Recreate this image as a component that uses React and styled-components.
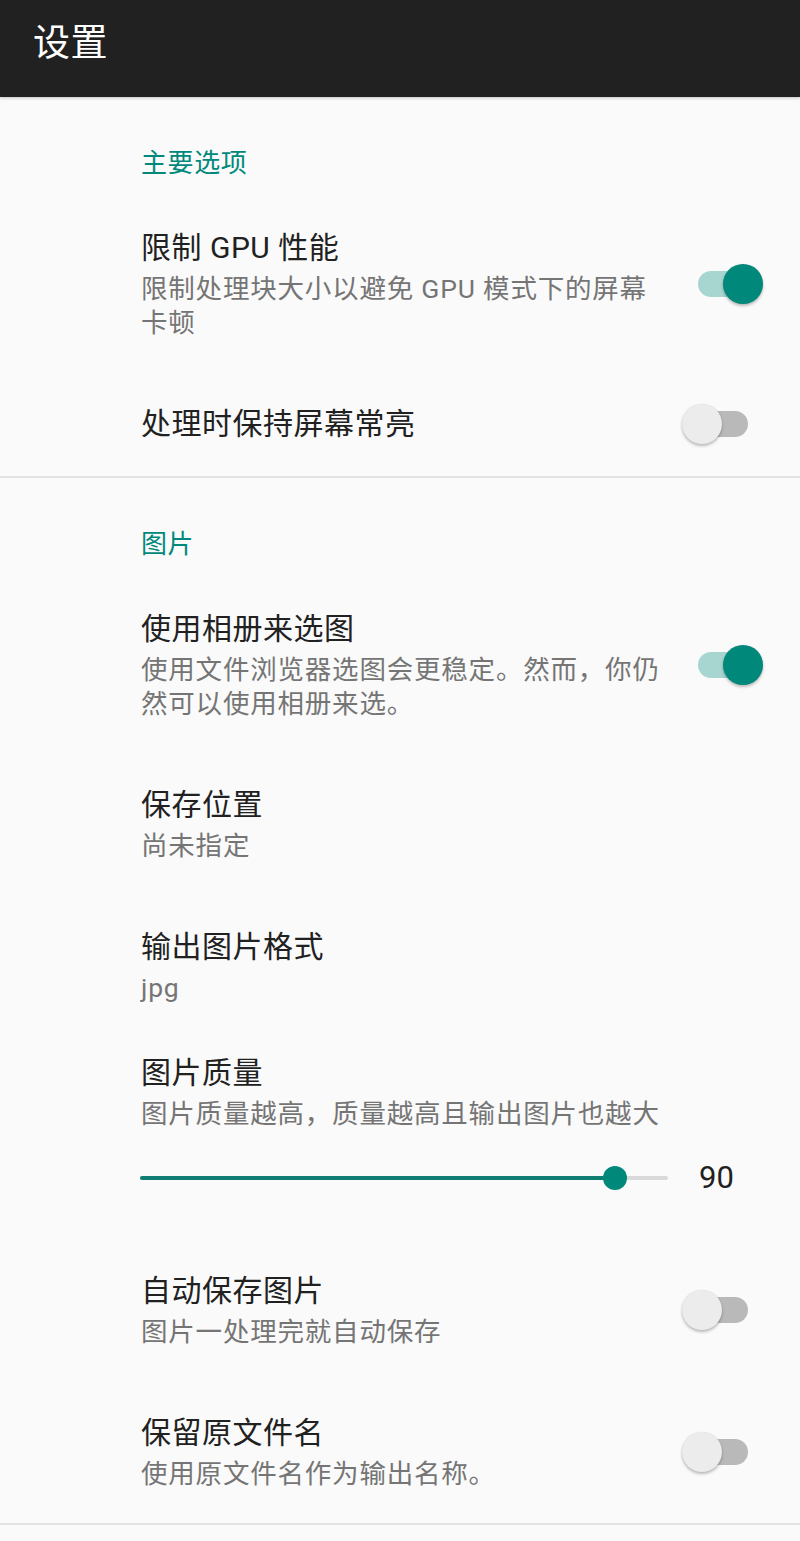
import React from 'react';
import styled, { createGlobalStyle } from 'styled-components';

const GlobalStyle = createGlobalStyle`
    html, body {
        margin: 0;
        padding: 0;
        background-color: #fafafa;
    }
    body {
        font-family: Roboto, "Noto Sans CJK SC", sans-serif;
        -webkit-font-smoothing: antialiased;
    }
`

function Switch({ on }) {
    return (
        <StyledSwitch>
            <SwitchTrack on={on ? 1 : 0} />
            <SwitchThumb on={on ? 1 : 0} />
        </StyledSwitch>
    )
}

function Slider({ value, max }) {
    const percent = (value / max) * 100
    return (
        <SliderRow>
            <SliderTrack>
                <SliderFill style={{ width: `${percent}%` }} />
                <SliderThumb style={{ left: `${percent}%` }} />
            </SliderTrack>
            <SliderValue>{value}</SliderValue>
        </SliderRow>
    )
}

function Preference({ item }) {
    return (
        <PrefRow compact={item.slider ? 1 : 0}>
            <div className='pref-main'>
                <PrefText narrow={item.switch !== undefined ? 1 : 0}>
                    <div className='pref-title'>{item.title}</div>
                    {item.summary && <div className='pref-summary'>{item.summary}</div>}
                </PrefText>
                {item.switch !== undefined && <Switch on={item.switch} />}
            </div>
            {item.slider && <Slider value={item.slider.value} max={item.slider.max} />}
        </PrefRow>
    )
}

function App() {
    const sections = [
        {
            category: "主要选项",
            items: [
                {
                    title: "限制 GPU 性能",
                    summary: "限制处理块大小以避免 GPU 模式下的屏幕卡顿",
                    switch: true
                },
                {
                    title: "处理时保持屏幕常亮",
                    switch: false
                },
            ]
        },
        {
            category: "图片",
            items: [
                {
                    title: "使用相册来选图",
                    summary: "使用文件浏览器选图会更稳定。然而，你仍然可以使用相册来选。",
                    switch: true
                },
                {
                    title: "保存位置",
                    summary: "尚未指定"
                },
                {
                    title: "输出图片格式",
                    summary: "jpg"
                },
                {
                    title: "图片质量",
                    summary: "图片质量越高，质量越高且输出图片也越大",
                    slider: { value: 90, max: 100 }
                },
                {
                    title: "自动保存图片",
                    summary: "图片一处理完就自动保存",
                    switch: false
                },
                {
                    title: "保留原文件名",
                    summary: "使用原文件名作为输出名称。",
                    switch: false
                },
            ]
        },
    ]

    return (
        <>
            <GlobalStyle />
            <Page>
                <Toolbar>
                    <h1>设置</h1>
                </Toolbar>
                {sections.map((section) => (
                    <Section key={section.category}>
                        <Category>{section.category}</Category>
                        {section.items.map((item) => (
                            <Preference key={item.title} item={item} />
                        ))}
                    </Section>
                ))}
            </Page>
        </>
    )
}

export default App

const Page = styled.div`
    min-height: 100vh;
    background-color: #fafafa;
`

const Toolbar = styled.header`
    position: relative;
    z-index: 1;
    height: 97px;
    box-sizing: border-box;
    padding: 22px 0 0 33px;
    background-color: #212121;
    box-shadow: 0 1px 3px rgba(0, 0, 0, 0.22);
    h1 {
        margin: 0;
        font-size: 37px;
        line-height: 44px;
        font-weight: 400;
        letter-spacing: 0.5px;
        color: #ffffff;
    }
`

const Section = styled.section`
    border-bottom: 2px solid #e2e2e2;
`

const Category = styled.div`
    padding: 48px 0 15px 141px;
    font-size: 26px;
    line-height: 36px;
    font-weight: 400;
    letter-spacing: 0.6px;
    color: #00897b;
`

const PrefRow = styled.div`
    padding: ${(p) => (p.compact ? '16px 37px 37px 141px' : '32px 37px 32px 141px')};
    .pref-main {
        display: flex;
        align-items: center;
    }
`

const PrefText = styled.div`
    flex: ${(p) => (p.narrow ? '0 0 526px' : '1')};
    margin-right: ${(p) => (p.narrow ? '15px' : '0')};
    .pref-title {
        font-size: 30px;
        line-height: 40px;
        letter-spacing: 0.5px;
        color: #212121;
    }
    .pref-summary {
        margin-top: 4px;
        font-size: 26.5px;
        line-height: 34px;
        letter-spacing: 0.8px;
        color: #757575;
    }
`

const StyledSwitch = styled.div`
    position: relative;
    flex: 0 0 81px;
    height: 40px;
`

const SwitchTrack = styled.div`
    position: absolute;
    left: 16px;
    top: 7px;
    width: 50px;
    height: 26px;
    border-radius: 13px;
    background-color: ${(p) => (p.on ? '#a7d5d0' : '#b9b9b9')};
`

const SwitchThumb = styled.div`
    position: absolute;
    top: 0;
    left: ${(p) => (p.on ? '41px' : '0')};
    width: 40px;
    height: 40px;
    border-radius: 50%;
    background-color: ${(p) => (p.on ? '#00897b' : '#ececec')};
    box-shadow: 0 2px 3px rgba(0, 0, 0, 0.25), 0 0 1px rgba(0, 0, 0, 0.12);
`

const SliderRow = styled.div`
    display: flex;
    align-items: center;
    height: 48px;
    margin-top: 23px;
    margin-left: -1px;
`

const SliderTrack = styled.div`
    position: relative;
    width: 528px;
    height: 4px;
    border-radius: 2px;
    background-color: #d9d9d9;
`

const SliderFill = styled.div`
    height: 100%;
    border-radius: 2px;
    background-color: #117e74;
`

const SliderThumb = styled.div`
    position: absolute;
    top: 50%;
    width: 24px;
    height: 24px;
    margin: -12px 0 0 -12px;
    border-radius: 50%;
    background-color: #00897b;
`

const SliderValue = styled.div`
    margin-left: 31px;
    font-size: 31px;
    line-height: 40px;
    color: #212121;
`
